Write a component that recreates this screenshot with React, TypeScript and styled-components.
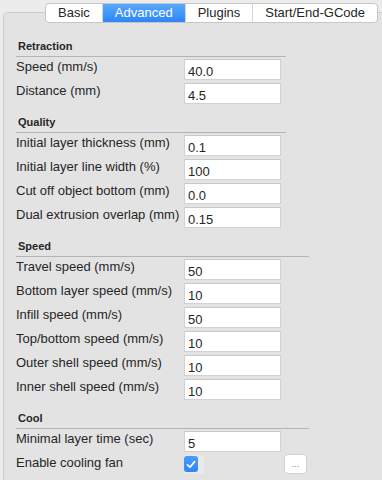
import React from "react";
import styled, { createGlobalStyle } from "styled-components";

const GlobalStyle = createGlobalStyle`
  html, body {
    margin: 0;
    padding: 0;
    background: #ececec;
  }
  body {
    font-family: "Liberation Sans", Arial, sans-serif;
    color: #262626;
  }
`;

type Field = { label: string; value?: string; check?: boolean; extra?: boolean };
type SectionData = { title: string; wide?: boolean; fields: Field[] };

const sections: SectionData[] = [
  {
    title: "Retraction",
    fields: [
      { label: "Speed (mm/s)", value: "40.0" },
      { label: "Distance (mm)", value: "4.5" },
    ],
  },
  {
    title: "Quality",
    fields: [
      { label: "Initial layer thickness (mm)", value: "0.1" },
      { label: "Initial layer line width (%)", value: "100" },
      { label: "Cut off object bottom (mm)", value: "0.0" },
      { label: "Dual extrusion overlap (mm)", value: "0.15" },
    ],
  },
  {
    title: "Speed",
    wide: true,
    fields: [
      { label: "Travel speed (mm/s)", value: "50" },
      { label: "Bottom layer speed (mm/s)", value: "10" },
      { label: "Infill speed (mm/s)", value: "50" },
      { label: "Top/bottom speed (mm/s)", value: "10" },
      { label: "Outer shell speed (mm/s)", value: "10" },
      { label: "Inner shell speed (mm/s)", value: "10" },
    ],
  },
  {
    title: "Cool",
    wide: true,
    fields: [
      { label: "Minimal layer time (sec)", value: "5" },
      { label: "Enable cooling fan", check: true, extra: true },
    ],
  },
];

const tabs = ["Basic", "Advanced", "Plugins", "Start/End-GCode"];

const Page = styled.div`
  width: 382px;
  height: 480px;
  overflow: hidden;
`;

const TabBar = styled.div`
  position: relative;
  z-index: 1;
  display: flex;
  margin: 3px 0 -11px 45px;
  height: 20px;
  width: max-content;
  box-sizing: border-box;
  background: #fff;
  border: 1px solid #c6c6c6;
  border-radius: 4px;
  overflow: hidden;
`;

const Tab = styled.div<{ $active?: boolean }>`
  display: flex;
  align-items: center;
  padding: 0 12px;
  font-size: 13px;
  line-height: 18px;
  color: ${({ $active }) => ($active ? "#fff" : "#262626")};
  background: ${({ $active }) =>
    $active ? "linear-gradient(#5aa7fb, #2b86f7)" : "transparent"};
  & + & {
    border-left: 1px solid #d6d6d6;
  }
`;

const Panel = styled.div`
  margin-left: 3px;
  width: 400px;
  height: 500px;
  box-sizing: border-box;
  background: #e3e3e3;
  border-top: 1px solid #cdcdcd;
  border-left: 1px solid #cdcdcd;
  border-top-left-radius: 5px;
  padding: 26px 0 0 12px;
`;

const Section = styled.section`
  & + & {
    margin-top: 11px;
  }
`;

const Heading = styled.div<{ $wide?: boolean }>`
  width: ${({ $wide }) => ($wide ? "291px" : "268px")};
  padding: 0 0 3px 2px;
  font-size: 11px;
  line-height: 14px;
  font-weight: 700;
  border-bottom: 1px solid #b4b4b4;
`;

const Rows = styled.div`
  display: grid;
  grid-template-columns: 165px 97px 23px;
  column-gap: 3px;
  row-gap: 3px;
  margin-top: 2px;
`;

const Label = styled.div`
  grid-column: 1;
  font-size: 13px;
  line-height: 16px;
  white-space: nowrap;
  align-self: start;
`;

const Input = styled.div`
  grid-column: 2;
  height: 21px;
  box-sizing: border-box;
  background: #fff;
  border: 1px solid #d2d2d2;
  border-top-color: #c8c8c8;
  padding: 4px 3px 0;
  font-size: 13px;
  line-height: 16px;
`;

const CheckCell = styled.div`
  grid-column: 2;
  height: 21px;
  display: flex;
  align-items: flex-start;
`;

const CheckWell = styled.div`
  width: 20px;
  height: 19px;
  background: #e9e9e9;
  padding-top: 1px;
  box-sizing: border-box;
`;

const CheckBox = styled.div`
  width: 14px;
  height: 16px;
  border-radius: 3px;
  background: linear-gradient(#4d9bf9, #2d86f6);
  display: flex;
  align-items: center;
  justify-content: center;
`;

const MoreButton = styled.div`
  grid-column: 3;
  width: 23px;
  height: 20px;
  margin-top: -1px;
  box-sizing: border-box;
  background: #fff;
  border: 1px solid #d0d0d0;
  border-radius: 4px;
  color: #777;
  font-size: 9px;
  line-height: 18px;
  text-align: center;
`;

const Check = () => (
  <svg width="10" height="9" viewBox="0 0 10 9">
    <path
      d="M1.5 4.8 L4 7.2 L8.6 1.6"
      fill="none"
      stroke="#fff"
      strokeWidth="1.7"
      strokeLinecap="round"
      strokeLinejoin="round"
    />
  </svg>
);

export default function App() {
  return (
    <Page>
      <GlobalStyle />
      <TabBar>
        {tabs.map((t) => (
          <Tab key={t} $active={t === "Advanced"}>
            {t}
          </Tab>
        ))}
      </TabBar>
      <Panel>
        {sections.map((s) => (
          <Section key={s.title}>
            <Heading $wide={s.wide}>{s.title}</Heading>
            <Rows>
              {s.fields.map((f) => (
                <React.Fragment key={f.label}>
                  <Label>{f.label}</Label>
                  {f.check ? (
                    <CheckCell>
                      <CheckWell>
                        <CheckBox>
                          <Check />
                        </CheckBox>
                      </CheckWell>
                    </CheckCell>
                  ) : (
                    <Input>{f.value}</Input>
                  )}
                  {f.extra && <MoreButton>...</MoreButton>}
                </React.Fragment>
              ))}
            </Rows>
          </Section>
        ))}
      </Panel>
    </Page>
  );
}
